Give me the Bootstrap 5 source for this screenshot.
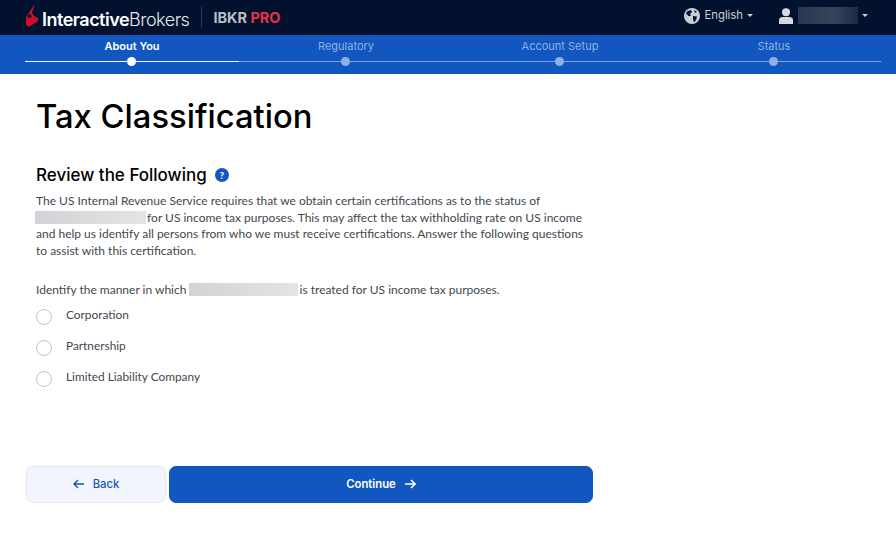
<!DOCTYPE html>
<html lang="en">
<head>
    <meta charset="UTF-8">
    <meta name="viewport" content="width=device-width, initial-scale=1.0">
    <title>Tax Classification</title>
    <link rel="stylesheet" href="https://cdn.jsdelivr.net/npm/bootstrap@5.3.0/dist/css/bootstrap.min.css">
    <style>
        body {
            font-family: Lato, "Liberation Sans", sans-serif;
            background-color: #fff;
            color: #43474f;
            height: 560px;
            overflow: hidden;
        }
        .top-bar {
            height: 35px;
            background-color: #02122e;
            padding-left: 25px;
            padding-right: 28px;
        }
        .brand-flame { margin-top: -5px; }
        .brand-text {
            font-family: Inter, sans-serif;
            font-size: 18px;
            letter-spacing: -0.5px;
            color: #fff;
            margin-left: 4px;
            margin-top: 3px;
        }
        .brand-text b { font-weight: 600; }
        .brand-text span { font-weight: 300; color: #e4e7ec; }
        .brand-sep {
            width: 1px;
            height: 21px;
            background-color: #2b3a55;
            margin-left: 12px;
            margin-right: 11px;
        }
        .brand-pro {
            font-family: Inter, sans-serif;
            font-weight: 700;
            font-size: 14.5px;
            color: #b9bec8;
        }
        .brand-pro span { color: #e8304a; }
        .top-right { margin-top: -4px; }
        .top-link {
            font-family: Inter, sans-serif;
            font-size: 11.3px;
            color: #c9ced6;
        }
        .caret-down {
            display: inline-block;
            border-top: 3px solid #c9ced6;
            border-left: 3px solid transparent;
            border-right: 3px solid transparent;
        }
        .user-icon { margin-left: 26px; margin-right: 5px; }
        .user-blur {
            width: 60px;
            height: 17px;
            background: linear-gradient(90deg, #28364f, #36445c 60%, #1c2a44);
        }
        .step-bar {
            height: 39px;
            background-color: #1257bf;
            padding-left: 25px;
            padding-right: 15px;
        }
        .step-item {
            width: 214px;
            height: 39px;
            position: relative;
            text-align: center;
            font-family: Inter, sans-serif;
            font-size: 11px;
            padding-top: 3px;
            color: #8fb0e4;
        }
        .step-line {
            position: absolute;
            left: 0;
            right: 0;
            top: 26px;
            height: 1px;
            background-color: #7da3e0;
        }
        .step-dot {
            position: absolute;
            left: 102px;
            top: 22px;
            width: 9px;
            height: 9px;
            border-radius: 50%;
            background-color: #8fb0e4;
        }
        .step-item.on { color: #fff; font-weight: 600; }
        .step-item.on .step-line,
        .step-item.on .step-dot { background-color: #fff; }
        .main-col {
            width: 593px;
            padding-left: 36px;
        }
        .page-title {
            font-family: Inter, sans-serif;
            font-size: 32.75px;
            font-weight: 500;
            color: #000;
            margin: 22px 0 0;
            line-height: 40px;
        }
        .sub-wrap { margin-top: 29px; }
        .sub-title {
            font-family: Inter, sans-serif;
            font-size: 17px;
            font-weight: 500;
            color: #000;
            margin: 0;
            line-height: 20px;
        }
        .help-dot {
            width: 14px;
            height: 14px;
            border-radius: 50%;
            background-color: #1257bf;
            color: #fff;
            font-size: 10px;
            font-weight: 700;
            line-height: 14px;
            text-align: center;
            margin-left: 8px;
        }
        .body-text {
            font-size: 12px;
            line-height: 16.7px;
            margin: 8px 0 0;
            width: 550px;
        }
        .manner { margin-top: 22px; margin-bottom: 7px; }
        .blur-box {
            display: inline-block;
            height: 13px;
            vertical-align: -2px;
            background: linear-gradient(90deg, #d2d3d6, #e4e4e6);
        }
        .blur-a { width: 111px; margin-left: -1px; margin-right: -2px; }
        .blur-b { width: 109px; margin-right: -2px; }
        .radio-row {
            height: 31px;
            font-size: 11.85px;
        }
        .radio-ring {
            width: 16px;
            height: 16px;
            border-radius: 50%;
            border: 1.5px solid #c6c6c2;
            background-color: #fff;
            margin-right: 14px;
            margin-top: 3px;
        }
        .btn-wrap { margin: 67px 0 0 26px; gap: 3px; }
        .btn-back, .btn-go {
            height: 37px;
            border-radius: 7px;
            font-family: Inter, sans-serif;
            font-size: 11.3px;
            font-weight: 500;
            padding: 0;
        }
        .btn-back {
            width: 140px;
            background-color: #f2f5fc;
            border: 1px solid #e3e8f3;
            color: #1257bf;
        }
        .btn-go {
            width: 424px;
            background-color: #1257bf;
            border: 1px solid #1257bf;
            color: #fff;
            font-weight: 600;
        }
    </style>
</head>
<body>

    <!-- Header -->
    <div class="top-bar d-flex align-items-center">
        <svg class="brand-flame" width="13" height="23" viewBox="0 0 13 23">
            <path fill="#c8102e" d="M10 0 L5 7 L1 13 L1 21 L4 23 L13 17 L13 14 L9 12 L7 9 Z"/>
            <circle cx="4.5" cy="12" r="2" fill="#02122e"/>
        </svg>
        <div class="brand-text"><b>Interactive</b><span>Brokers</span></div>
        <div class="brand-sep"></div>
        <div class="brand-pro">IBKR <span>PRO</span></div>
        <div class="ms-auto d-flex align-items-center top-right">
            <svg width="16" height="16" viewBox="0 0 16 16">
                <circle cx="8" cy="8" r="8" fill="#c9ced6"/>
                <path fill="#02122e" d="M3 3.5 L7 2 L8 4 L6 6 L7 8 L4.5 8 L2 5.5 Z M9 8 L13 8.5 L12 12 L10 14.5 L9 11 Z M10 2 L13 4 L11 5 Z"/>
            </svg>
            <span class="top-link ms-1">English</span>
            <span class="caret-down ms-1"></span>
            <svg class="user-icon" width="14" height="16" viewBox="0 0 14 16">
                <circle cx="7" cy="4.2" r="4" fill="#d6d9de"/>
                <path fill="#d6d9de" d="M0 16 L0 12 Q0 9 4 9 L10 9 Q14 9 14 12 L14 16 Z"/>
            </svg>
            <div class="user-blur"></div>
            <span class="caret-down ms-1"></span>
        </div>
    </div>

    <!-- Steps -->
    <div class="step-bar d-flex">
        <div class="step-item on"><div class="step-line"></div><div class="step-dot"></div>About You</div>
        <div class="step-item"><div class="step-line"></div><div class="step-dot"></div>Regulatory</div>
        <div class="step-item"><div class="step-line"></div><div class="step-dot"></div>Account Setup</div>
        <div class="step-item"><div class="step-line"></div><div class="step-dot"></div>Status</div>
    </div>

    <!-- Main Content -->
    <div class="main-col">
        <h1 class="page-title">Tax Classification</h1>
        <div class="d-flex align-items-center sub-wrap">
            <h2 class="sub-title">Review the Following</h2>
            <div class="help-dot">?</div>
        </div>
        <p class="body-text">The US Internal Revenue Service requires that we obtain certain certifications as to the status of <span class="blur-box blur-a"></span> for US income tax purposes. This may affect the tax withholding rate on US income and help us identify all persons from who we must receive certifications. Answer the following questions to assist with this certification.</p>
        <p class="body-text manner">Identify the manner in which <span class="blur-box blur-b"></span> is treated for US income tax purposes.</p>
        <div class="radio-row d-flex"><div class="radio-ring"></div><div>Corporation</div></div>
        <div class="radio-row d-flex"><div class="radio-ring"></div><div>Partnership</div></div>
        <div class="radio-row d-flex"><div class="radio-ring"></div><div>Limited Liability Company</div></div>
    </div>

    <div class="btn-wrap d-flex">
        <button class="btn btn-back d-flex align-items-center justify-content-center" type="button">
            <svg width="12" height="10" viewBox="0 0 12 10" fill="none" stroke="#1257bf" stroke-width="1.4"><path d="M11 5 H1 M5 1 L1 5 L5 9"/></svg>
            <span class="ms-2">Back</span>
        </button>
        <button class="btn btn-go d-flex align-items-center justify-content-center" type="button">
            <span class="me-2">Continue</span>
            <svg width="12" height="10" viewBox="0 0 12 10" fill="none" stroke="#fff" stroke-width="1.6"><path d="M1 5 H11 M7 1 L11 5 L7 9"/></svg>
        </button>
    </div>

</body>
</html>
